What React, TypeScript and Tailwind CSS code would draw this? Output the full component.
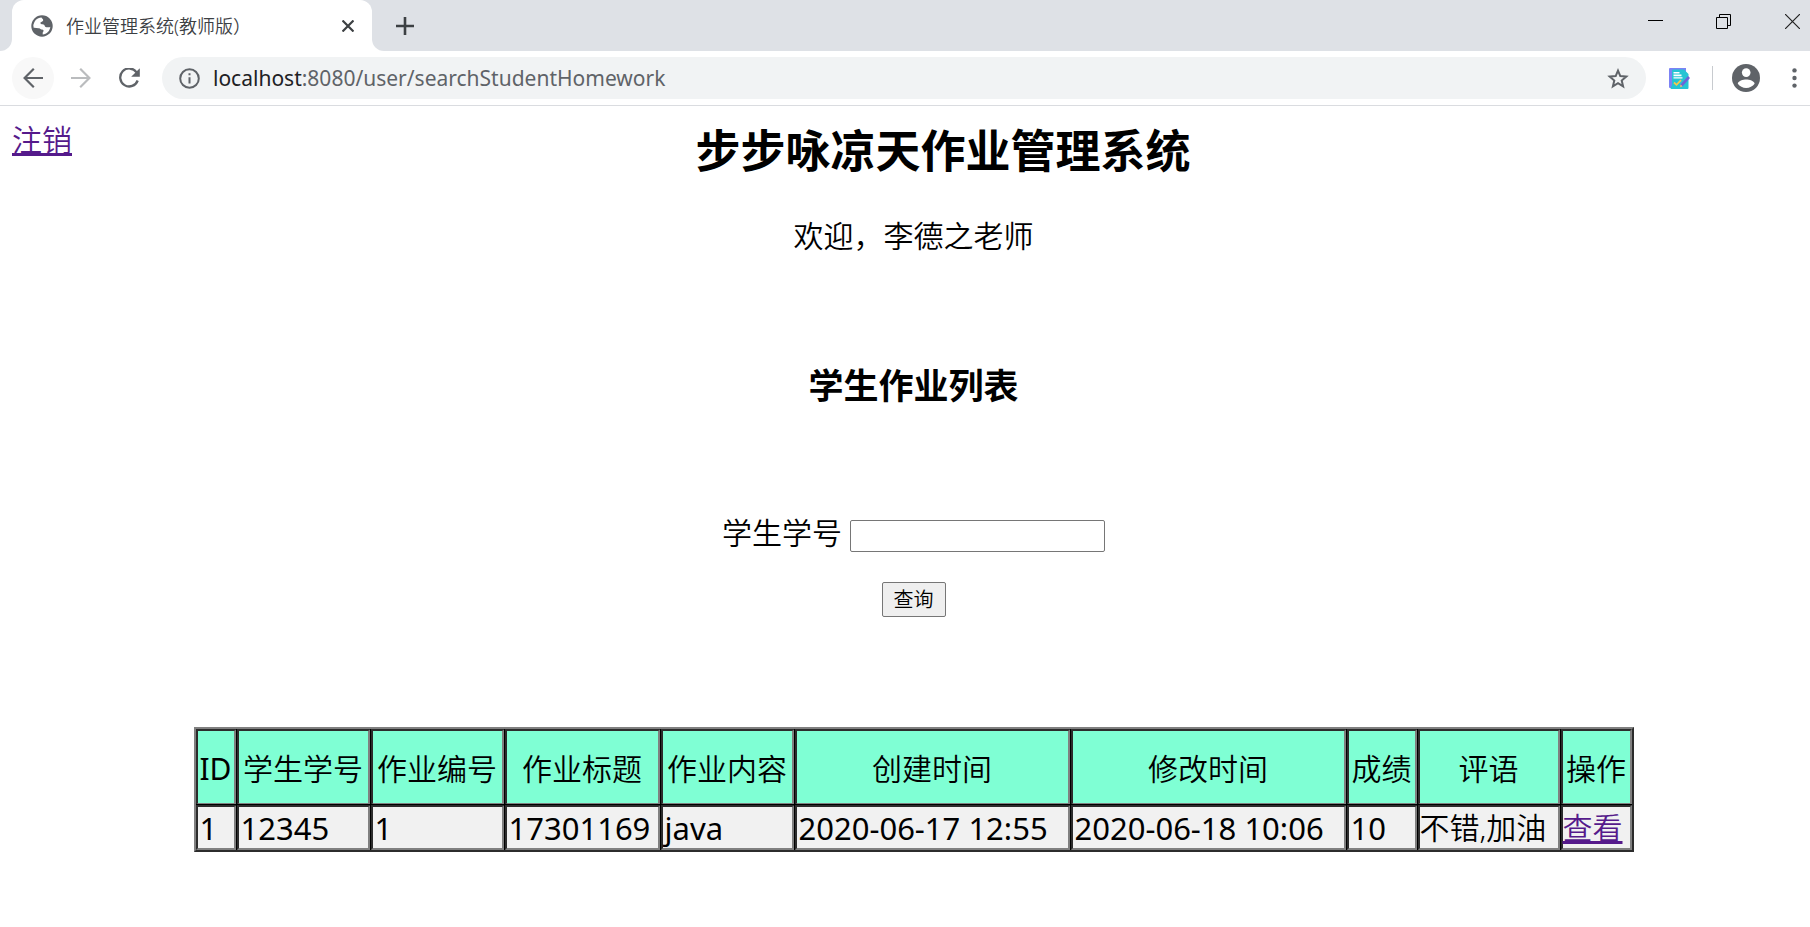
import type { ReactNode } from "react";

const columns = [
  { title: "ID", width: "w-[41px]", weight: "font-normal" },
  { title: "学生学号", width: "w-[134px]", weight: "font-[350]" },
  { title: "作业编号", width: "w-[134px]", weight: "font-[350]" },
  { title: "作业标题", width: "w-[156px]", weight: "font-[350]" },
  { title: "作业内容", width: "w-[134px]", weight: "font-[350]" },
  { title: "创建时间", width: "w-[276px]", weight: "font-[350]" },
  { title: "修改时间", width: "w-[276px]", weight: "font-[350]" },
  { title: "成绩", width: "w-[71px]", weight: "font-[350]" },
  { title: "评语", width: "w-[143px]", weight: "font-[350]" },
  { title: "操作", width: "w-[71px]", weight: "font-[350]" },
];

const row = ["1", "12345", "1", "17301169", "java", "2020-06-17 12:55", "2020-06-18 10:06", "10"];

const bevel =
  "border-2 border-r-3 last:border-r-2 border-t-[#2c2c2c] border-l-[#2c2c2c] border-r-[#808080] border-b-[#808080] not-first:shadow-[-1px_0_0_#000]";

const link = "text-[#551a8b] underline decoration-3";

function IconButton({ label, className = "", children }: { label: string; className?: string; children: ReactNode }) {
  return (
    <button type="button" aria-label={label} className={`flex items-center justify-center shrink-0 ${className}`}>
      {children}
    </button>
  );
}

function TabStrip() {
  return (
    <div className="flex h-[51px] bg-[#dee1e6]">
      <div className="flex w-3 bg-white">
        <div className="w-full rounded-br-xl bg-[#dee1e6]" />
      </div>
      <div className="flex w-[360px] items-center rounded-t-xl bg-white pl-[19px] pr-3">
        <svg viewBox="0 0 22 22" className="size-[22px] shrink-0">
          <circle cx="11" cy="11" r="10.7" fill="#5f6368" />
          <path
            d="M10.5 2.6C10.9 4 12.2 3.8 12.2 5.3c0 1.400-1.800 1.200-2.700 2.300-.6.8.4 1.700 1.500 1.600 1.700-.2 2.600.8 2.900 2.100.3 1 1.600 1.100 3.100 1 .9 0 1.600.2 2.300-.5-.3 4-3.500 7.500-7.600 7.800v-1.700c0-1 1-1.300.9-2.300-.1-.9-1.300-1.200-2.300-1.200-1.500 0-1.500-2.200-3-2.700-1.500-.4-3.200-.2-4.700-.3-.4-4.800 3.500-8.800 7.900-8.800Z"
            fill="#fff"
          />
          <path d="M2.600 9.500c1.700 0 3-.1 4.300.6.900.5.400 1.300 1.800 1.400l3 .2-1 1.900-3.200-.4c-1.500-.2-3.500-.5-4.900-.4Z" fill="#fff" />
        </svg>
        <span className="ml-[13px] grow text-lg font-[350] text-[#3c4043]">作业管理系统(教师版）</span>
        <IconButton label="关闭标签页" className="size-6">
          <svg viewBox="0 0 12 12" className="size-3" stroke="#3c4043" strokeWidth="2.2">
            <path d="M.5.5l11 11M11.500.5l-11 11" />
          </svg>
        </IconButton>
      </div>
      <div className="flex w-3 bg-white">
        <div className="w-full rounded-bl-xl bg-[#dee1e6]" />
      </div>
      <IconButton label="新标签页" className="ml-[9px] w-6">
        <svg viewBox="0 0 18 18" className="size-[18px]" stroke="#3c4043" strokeWidth="2.6">
          <path d="M9 0v18M0 9h18" />
        </svg>
      </IconButton>
      <div className="grow" />
      <div className="flex h-[43px]">
        <IconButton label="最小化" className="w-[68px]">
          <svg viewBox="0 0 15 15" className="size-[15px]" fill="#000">
            <path d="M0 6h15v1H0z" />
          </svg>
        </IconButton>
        <IconButton label="还原" className="w-[69px]">
          <svg viewBox="0 0 15 15" className="size-[15px]" fill="none" stroke="#000">
            <path d="M.5 3.500h11v11H.5zM3.500 3.500v-3h11v11h-3" />
          </svg>
        </IconButton>
        <IconButton label="关闭" className="-mr-[17px] w-[69px]">
          <svg viewBox="0 0 15 15" className="size-[15px]" stroke="#222" strokeWidth="1.200">
            <path d="M0 0l15 15M15 0L0 15" />
          </svg>
        </IconButton>
      </div>
    </div>
  );
}

function Toolbar() {
  return (
    <div className="flex h-[55px] items-center border-b border-[#dadce0] bg-white pl-3">
      <IconButton label="后退" className="size-[42px] rounded-full bg-[#f8f8f8]">
        <svg viewBox="0 0 20 20" className="size-5" fill="none" stroke="#5f6368" strokeWidth="2.2">
          <path d="M20 10H1.800M10.800.8L1.600 10l9.200 9.200" />
        </svg>
      </IconButton>
      <IconButton label="前进" className="ml-[6px] size-[42px]">
        <svg viewBox="0 0 20 20" className="size-5" fill="none" stroke="#babcbe" strokeWidth="2.200">
          <path d="M0 10h18.200M9.200.8l9.200 9.200-9.200 9.200" />
        </svg>
      </IconButton>
      <IconButton label="重新加载" className="ml-[7px] size-[42px]">
        <svg viewBox="0 0 22 20" className="h-5 w-[22px]">
          <path d="M17.600 4.300A9 9 0 1 0 18.700 12.500" fill="none" stroke="#5f6368" strokeWidth="2.300" />
          <path d="M20.800.2v8.600h-8.600z" fill="#5f6368" />
        </svg>
      </IconButton>
      <div className="ml-[11px] flex h-[42px] grow items-center rounded-full bg-[#f1f3f4] pl-[17px] pr-4">
        <svg viewBox="0 0 21 21" className="size-[21px] shrink-0">
          <circle cx="10.500" cy="10.500" r="9.300" fill="none" stroke="#5f6368" strokeWidth="2" />
          <path d="M9.500 5.200h2v2h-2zM9.500 9.200h2v6.200h-2z" fill="#5f6368" />
        </svg>
        <span className="ml-[13px] grow text-[21px] leading-7 text-[#5f6368]">
          <span className="text-[#202124]">localhost</span>:8080/user/searchStudentHomework
        </span>
        <IconButton label="添加书签" className="size-6">
          <svg viewBox="0 0 22 21" className="h-[21px] w-[22px]" fill="none" stroke="#5f6368" strokeWidth="2">
            <path d="M11 2.600l2.300 5.500 6 .5-4.600 3.900 1.400 5.800-5.100-3.100-5.100 3.100 1.400-5.800L2.700 8.600l6-.5z" />
          </svg>
        </IconButton>
      </div>
      <IconButton label="扩展程序" className="ml-[21px] size-6">
        <svg viewBox="0 0 21 21" className="size-[21px]">
          <path d="M1 0h16v20H1a1 1 0 0 1-1-1V1a1 1 0 0 1 1-1z" fill="#7c83f5" />
          <path d="M4 1.500h11l4.500 4.500v14a1 1 0 0 1-1 1h-16a1 1 0 0 1-1-1L3 17V2.500a1 1 0 0 1 1-1z" fill="#25c4d3" />
          <path d="M4.500 4h6v1.600h-6zM4.500 6.600h8v1.600h-8zM4.500 9.200h9v1.400h-9z" fill="#fff" />
          <path d="M5 14.500l2.500 2.300 4.500-4.600" fill="none" stroke="#f5c84c" strokeWidth="1.800" />
          <path d="M19 8l2 2-7.500 8.200-2.500 1 .5-2.700z" fill="#6c63d8" />
          <path d="M11.600 16.500l1.900 1.700-2.300 1z" fill="#ffd066" />
        </svg>
      </IconButton>
      <div className="ml-[21px] h-6 w-px bg-[#c8cbcf]" />
      <IconButton label="用户" className="ml-[19px] size-7">
        <svg viewBox="0 0 28 28" className="size-7">
          <circle cx="14" cy="14" r="14" fill="#5f6368" />
          <circle cx="14.200" cy="8.600" r="4.300" fill="#fff" />
          <path d="M5.800 19.800c0-3 5.500-4.400 8.400-4.400s8.400 1.400 8.400 4.400c-1.800 2.700-5 4.200-8.400 4.200s-6.600-1.500-8.400-4.200z" fill="#fff" />
        </svg>
      </IconButton>
      <IconButton label="菜单" className="mr-1 ml-[22px] size-6">
        <svg viewBox="0 0 5 20" className="h-5 w-[5px]" fill="#5f6368">
          <circle cx="2.500" cy="2.400" r="2.200" />
          <circle cx="2.500" cy="10" r="2.200" />
          <circle cx="2.500" cy="17.600" r="2.200" />
        </svg>
      </IconButton>
    </div>
  );
}

export default function App() {
  return (
    <div className="min-h-screen bg-white font-['Noto_Sans','Noto_Sans_CJK_SC',sans-serif] text-black">
      <TabStrip />
      <Toolbar />
      <main className="pt-[14px] text-[30px] font-[350] leading-10">
        <header className="flex items-start pl-3">
          <a href="#logout" className={link}>
            注销
          </a>
          <h1 className="grow pl-1 pt-[3px] text-center text-[45px] font-bold leading-[56px]">步步咏凉天作业管理系统</h1>
        </header>
        <section className="pl-[17px]">
          <p className="mt-[37px] text-center">欢迎，李德之老师</p>
          <h2 className="mt-[106px] text-center text-[35px] font-bold leading-[48px]">学生作业列表</h2>
          <form className="mt-[103px] flex flex-col items-center gap-[29px]">
            <div className="flex items-center gap-2">
              <label htmlFor="student-number">学生学号</label>
              <input
                id="student-number"
                type="text"
                className="mt-[6px] h-8 w-[255px] rounded-[2px] border border-[#767676] bg-white px-1 text-xl"
              />
            </div>
            <button type="button" className="h-[35px] w-16 rounded-[2px] border border-[#767676] bg-[#efefef] text-xl leading-8">
              查询
            </button>
          </form>
          <table className="mx-auto mt-[110px] w-[1440px] table-fixed border-separate border-spacing-0 border-2 border-t-[#808080] border-l-[#808080] border-r-[#2c2c2c] border-b-[#2c2c2c]">
            <thead>
              <tr className="h-[76px] bg-[#7fffd4]">
                {columns.map((column) => (
                  <th
                    key={column.title}
                    className={`${column.width} ${column.weight} ${bevel} whitespace-nowrap p-0 pt-1 text-center`}
                  >
                    {column.title}
                  </th>
                ))}
              </tr>
            </thead>
            <tbody>
              <tr className="h-[45px] bg-[#f1f1f1] shadow-[0_-1px_0_#000]">
                {row.map((value, index) => (
                  <td key={index} className={`${bevel} whitespace-nowrap px-[2px] py-0 text-[31px] font-normal`}>
                    {value}
                  </td>
                ))}
                <td className={`${bevel} whitespace-nowrap p-0`}>不错,加油</td>
                <td className={`${bevel} whitespace-nowrap p-0`}>
                  <a href="#view" className={link}>
                    查看
                  </a>
                </td>
              </tr>
            </tbody>
          </table>
        </section>
      </main>
    </div>
  );
}
